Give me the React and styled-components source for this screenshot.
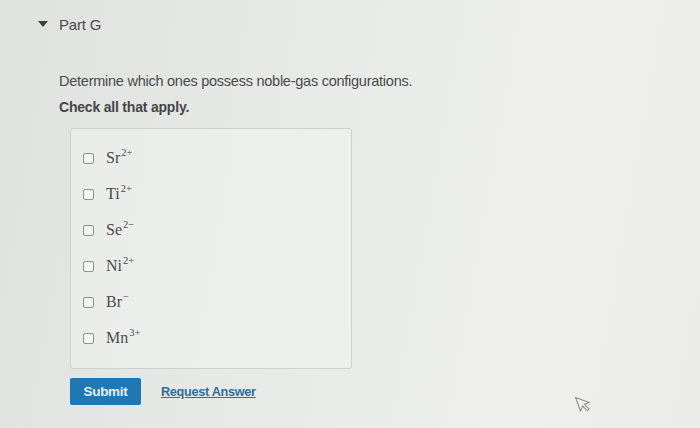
import React from "react";
import styled, { createGlobalStyle } from "styled-components";

const Global = createGlobalStyle`
  html, body { margin: 0; padding: 0; }
  body {
    width: 700px; height: 428px; overflow: hidden;
    background: linear-gradient(100deg, #e0e2e0 0%, #e8eae8 40%, #eff0ee 75%, #ecedeb 100%);
    font-family: "Liberation Sans", Arial, sans-serif;
  }
`;

const Page = styled.div`
  position: relative;
  width: 700px;
  height: 428px;
  padding: 15px 0 0 34px;
  box-sizing: border-box;
`;

const Header = styled.div`
  display: flex;
  align-items: center;
  gap: 11px;
  height: 18px;
`;

const Caret = styled.span`
  width: 0; height: 0;
  border-left: 5px solid transparent;
  border-right: 5px solid transparent;
  border-top: 6px solid #3c3e40;
  margin-left: 4px;
`;

const PartTitle = styled.div`
  font-size: 15px;
  color: #4a4b4c;
  letter-spacing: -0.2px;
`;

const Body = styled.div`
  padding: 40px 0 0 25px;
  display: flex;
  flex-direction: column;
`;

const Prompt = styled.div`
  font-size: 14.5px;
  color: #4a4a4c;
  letter-spacing: -0.25px;
  line-height: 17px;
`;

const Instruction = styled.div`
  margin-top: 9px;
  font-size: 14px;
  font-weight: bold;
  color: #444548;
  letter-spacing: -0.2px;
  line-height: 17px;
`;

const OptionsBox = styled.div`
  margin: 12px 0 0 11px;
  width: 282px;
  height: 241px;
  box-sizing: border-box;
  border: 1px solid #cfd1cf;
  border-radius: 3px;
  background: rgba(245, 246, 244, 0.45);
  padding: 19px 0 0 12px;
  display: flex;
  flex-direction: column;
  gap: 16px;
`;

const Option = styled.label`
  display: flex;
  align-items: center;
  gap: 12px;
  height: 20px;
`;

const Box = styled.span`
  width: 9px;
  height: 9px;
  border: 1px solid #8f9191;
  border-radius: 2px;
  background: #f4f5f3;
  flex: none;
`;

const Formula = styled.span`
  font-family: "Liberation Serif", "Times New Roman", serif;
  font-size: 16px;
  color: #4a4b4d;
`;

const Sup = styled.sup`
  font-size: 10.5px;
  vertical-align: 7px;
  line-height: 0;
  margin-left: 1px;
`;

const Actions = styled.div`
  display: flex;
  align-items: center;
  gap: 20px;
  margin: 9px 0 0 11px;
`;

const SubmitButton = styled.button`
  width: 71px;
  height: 27px;
  background: #1f78b2;
  border: none;
  border-radius: 2px;
  color: #e8f1f6;
  font-family: "Liberation Sans", Arial, sans-serif;
  font-size: 13.5px;
  font-weight: bold;
  letter-spacing: -0.3px;
  padding: 0;
`;

const RequestLink = styled.a`
  font-size: 12.7px;
  font-weight: bold;
  color: #2f6e9a;
  text-decoration: underline;
  letter-spacing: -0.3px;
`;

const Cursor = styled.svg`
  position: absolute;
  left: 575px;
  top: 393px;
`;

const options = [
  ["Sr", "2+"],
  ["Ti", "2+"],
  ["Se", "2−"],
  ["Ni", "2+"],
  ["Br", "−"],
  ["Mn", "3+"],
];

export default function App() {
  return (
    <>
      <Global />
      <Page>
        <Header>
          <Caret />
          <PartTitle>Part G</PartTitle>
        </Header>
        <Body>
          <Prompt>Determine which ones possess noble-gas configurations.</Prompt>
          <Instruction>Check all that apply.</Instruction>
          <OptionsBox>
            {options.map(([el, ch]) => (
              <Option key={el}>
                <Box />
                <Formula>
                  {el}
                  <Sup>{ch}</Sup>
                </Formula>
              </Option>
            ))}
          </OptionsBox>
          <Actions>
            <SubmitButton>Submit</SubmitButton>
            <RequestLink>Request Answer</RequestLink>
          </Actions>
        </Body>
        <Cursor width="19" height="22" viewBox="0 0 16 20">
          <path d="M2 2 L2 15 L5.5 11.5 L8 17 L10 16 L7.5 10.5 L12 10.5 Z" fill="#f2f2f0" stroke="#8a8c8c" strokeWidth="1" transform="rotate(-20 7 9)" />
        </Cursor>
      </Page>
    </>
  );
}
